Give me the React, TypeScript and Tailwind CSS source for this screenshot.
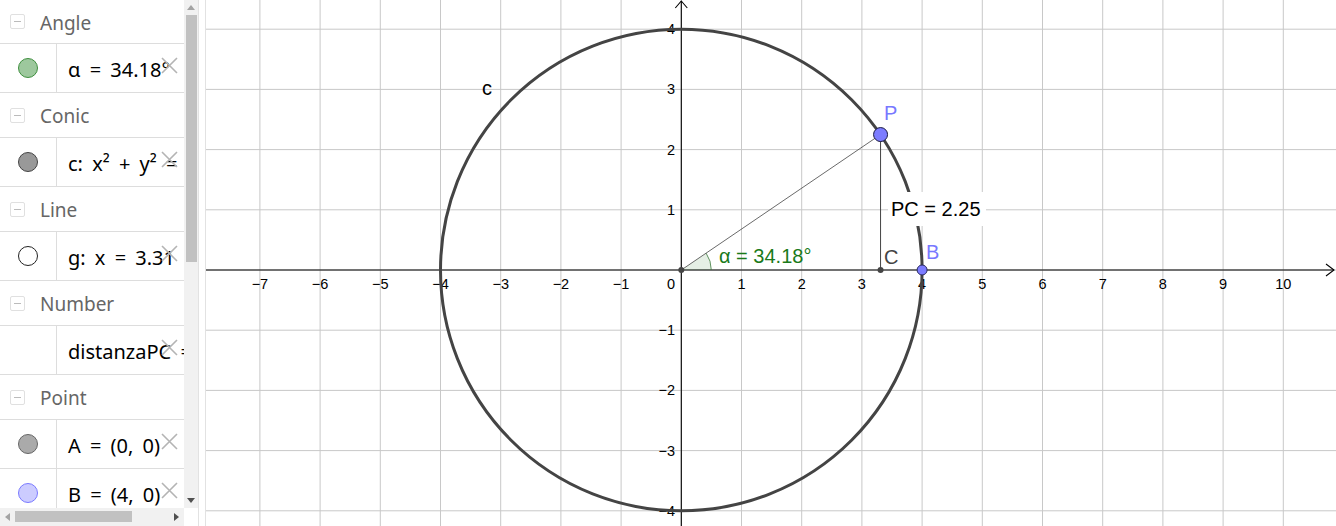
import React from "react";

// GeoGebra-style algebra view + graphics view
const UNIT = 60.2;
const OX = 681.3;
const OY = 270;

const px = (x: number) => OX + x * UNIT;
const py = (y: number) => OY - y * UNIT;

type Row =
  | { kind: "header"; label: string; h: number }
  | { kind: "item"; text: React.ReactNode; dot?: string };

const rows: Row[] = [
  { kind: "header", label: "Angle", h: 44 },
  { kind: "item", text: "α = 34.18°", dot: "bg-[#9dc89d] border-[#3f8f3f]" },
  { kind: "header", label: "Conic", h: 45 },
  { kind: "item", text: "c: x² + y² =", dot: "bg-[#999999] border-[#444444]" },
  { kind: "header", label: "Line", h: 45 },
  { kind: "item", text: "g: x = 3.31", dot: "bg-white border-[#222222]" },
  { kind: "header", label: "Number", h: 45 },
  { kind: "item", text: "distanzaPC =" },
  { kind: "header", label: "Point", h: 45 },
  { kind: "item", text: "A = (0, 0)", dot: "bg-[#aaaaaa] border-[#666666]" },
  { kind: "item", text: "B = (4, 0)", dot: "bg-[#ccccff] border-[#7a7aff]" },
];

const CloseX = () => (
  <svg className="absolute right-[6px] top-[13px]" width="17" height="17" viewBox="0 0 17 17">
    <path d="M1 1 L16 16 M16 1 L1 16" stroke="#b4b4b4" strokeWidth="1.6" />
  </svg>
);

const AlgebraRow = ({ row }: { row: Row }) => {
  if (row.kind === "header") {
    return (
      <div
        className={`flex shrink-0 items-center border-b border-[#dddddd] ${row.h === 44 ? "h-[44px]" : "h-[45px]"}`}
      >
        <div className="ml-[10px] flex h-[15px] w-[15px] items-center justify-center rounded-[2px] border border-[#e0e0e0]">
          <div className="h-[1px] w-[7px] bg-[#bbbbbb]" />
        </div>
        <span className="ml-[15px] mt-[3px] text-[19px] text-[#666666]">{row.label}</span>
      </div>
    );
  }
  return (
    <div className="flex h-[49px] shrink-0 border-b border-[#dddddd]">
      <div className="flex w-[57px] shrink-0 items-center justify-center border-r border-[#dddddd]">
        {row.dot && <div className={`h-[20px] w-[20px] rounded-full border ${row.dot}`} />}
      </div>
      <div className="relative flex min-w-0 flex-1 items-center overflow-hidden">
        <span className="ml-[11px] mt-[3px] whitespace-nowrap text-[20px] text-black [word-spacing:4px]">
          {row.text}
        </span>
        <CloseX />
      </div>
    </div>
  );
};

const Graphics = () => {
  const xs = Array.from({ length: 18 }, (_, i) => i - 7); // -7..10
  const ys = [-4, -3, -2, -1, 1, 2, 3, 4];
  const P = { x: px(3.31), y: py(2.25) };
  const C = { x: px(3.31), y: OY };
  const B = { x: px(4), y: OY };
  const ang = (34.18 * Math.PI) / 180;
  const r = 30;
  const arcEnd = { x: OX + r * Math.cos(ang), y: OY - r * Math.sin(ang) };

  return (
    <svg width="1130" height="526" viewBox="206 0 1130 526" className="block">
      <g stroke="#c8c8c8" strokeWidth="1">
        {Array.from({ length: 19 }, (_, i) => i - 8).map((k) => (
          <line key={"v" + k} x1={px(k)} y1={0} x2={px(k)} y2={526} />
        ))}
        {[-4, -3, -2, -1, 0, 1, 2, 3, 4].map((k) => (
          <line key={"h" + k} x1={206} y1={py(k)} x2={1336} y2={py(k)} />
        ))}
      </g>

      {/* axes */}
      <g stroke="#000" strokeWidth="1.1" fill="none">
        <line x1={206} y1={OY} x2={1334} y2={OY} />
        <path d={`M1326 ${OY - 6} L1334 ${OY} L1326 ${OY + 6}`} />
        <line x1={OX} y1={526} x2={OX} y2={1} />
        <path d={`M${OX - 6} 8 L${OX} 1 L${OX + 6} 8`} />
      </g>

      <g fontFamily="'Liberation Sans', Arial, sans-serif" fontSize="14.5" fill="#000">
        {xs
          .filter((k) => k !== 0)
          .map((k) => (
            <text key={"xl" + k} x={px(k)} y={289} textAnchor="middle">
              {k < 0 ? `−${-k}` : k}
            </text>
          ))}
        <text x={675} y={289} textAnchor="end">
          0
        </text>
        {ys.map((k) => (
          <text key={"yl" + k} x={675} y={py(k) + 5} textAnchor="end">
            {k < 0 ? `−${-k}` : k}
          </text>
        ))}
      </g>

      {/* angle sector */}
      <path
        d={`M${OX} ${OY} L${OX + r} ${OY} A${r} ${r} 0 0 0 ${arcEnd.x} ${arcEnd.y} Z`}
        fill="rgba(0,100,0,0.1)"
        stroke="none"
      />
      <path
        d={`M${OX + r} ${OY} A${r} ${r} 0 0 0 ${arcEnd.x} ${arcEnd.y}`}
        fill="none"
        stroke="#3c7a3c"
        strokeWidth="0.8"
      />

      {/* circle c */}
      <circle cx={OX} cy={OY} r={4 * UNIT} fill="none" stroke="#444444" strokeWidth="3" />

      {/* segments */}
      <line x1={OX} y1={OY} x2={P.x} y2={P.y} stroke="#444" strokeWidth="0.8" />
      <line x1={P.x} y1={P.y} x2={C.x} y2={C.y} stroke="#444" strokeWidth="1" />

      {/* PC label box */}
      <rect x={888} y={192} width={98} height={34} fill="#fff" />

      <g fontFamily="'Liberation Sans', Arial, sans-serif" fontSize="20">
        <text x={891} y={216} fill="#000">
          PC = 2.25
        </text>
        <text x={719} y={263} fill="#1a7a1a">
          α = 34.18°
        </text>
        <text x={482} y={95} fill="#000">
          c
        </text>
        <text x={884} y={120} fill="#7878ff">
          P
        </text>
        <text x={926} y={259} fill="#7878ff">
          B
        </text>
        <text x={884} y={264} fill="#444">
          C
        </text>
      </g>

      {/* points */}
      <circle cx={OX} cy={OY} r={3} fill="#444" />
      <circle cx={C.x} cy={C.y} r={3} fill="#444" />
      <circle cx={B.x} cy={B.y} r={5} fill="#7c7cff" stroke="#2a2a60" strokeWidth="1" />
      <circle cx={P.x} cy={P.y} r={7} fill="#7c7cff" stroke="#1a1a40" strokeWidth="1" />
    </svg>
  );
};

export default function App() {
  return (
    <div className="flex h-[526px] w-[1336px] overflow-hidden bg-white font-['Noto_Sans',sans-serif]">
      {/* algebra view */}
      <div className="flex w-[198px] shrink-0 flex-col">
        <div className="flex h-[508px]">
          <div className="flex w-[184px] flex-col overflow-hidden">
            {rows.map((row, i) => (
              <AlgebraRow key={i} row={row} />
            ))}
          </div>
          <div className="relative w-[14px] bg-[#f1f1f1]">
            <div className="absolute left-[3px] top-[5px] h-0 w-0 border-x-[4px] border-b-[5px] border-x-transparent border-b-[#a3a3a3]" />
            <div className="absolute left-[2px] top-[15px] h-[247px] w-[11px] bg-[#c1c1c1]" />
            <div className="absolute bottom-[5px] left-[3px] h-0 w-0 border-x-[4px] border-t-[5px] border-x-transparent border-t-[#505050]" />
          </div>
        </div>
        <div className="flex h-[18px]">
          <div className="relative w-[184px] bg-[#f1f1f1]">
            <div className="absolute left-[5px] top-[5px] h-0 w-0 border-y-[4px] border-r-[5px] border-y-transparent border-r-[#a3a3a3]" />
            <div className="absolute left-[15px] top-[3px] h-[11px] w-[117px] bg-[#c1c1c1]" />
            <div className="absolute right-[5px] top-[5px] h-0 w-0 border-y-[4px] border-l-[5px] border-y-transparent border-l-[#505050]" />
          </div>
          <div className="w-[14px] bg-white" />
        </div>
      </div>
      {/* splitter */}
      <div className="w-[8px] shrink-0 border-l border-r border-[#e2e2e2] bg-white" />
      <Graphics />
    </div>
  );
}
